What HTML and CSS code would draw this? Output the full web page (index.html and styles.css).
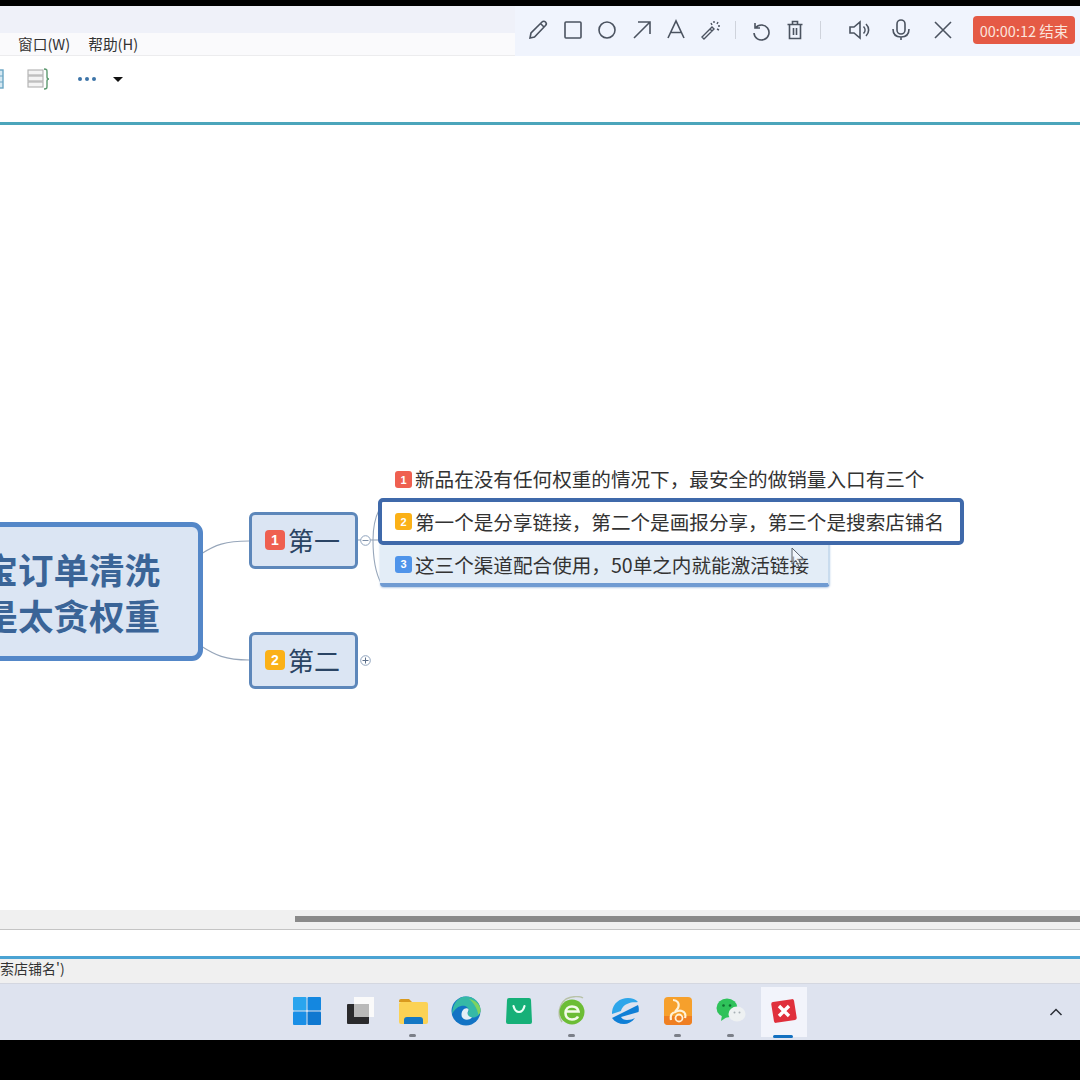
FILE: index.html
```html
<!DOCTYPE html>
<html lang="zh">
<head>
<meta charset="utf-8">
<title>思维导图</title>
<link rel="stylesheet" href="styles.css">
</head>
<body>
<div class="screen">
  <div class="black-top"></div>
  <div class="title-band"></div>
  <div class="menu-band">
    <span class="menu-item">窗口(W)</span>
    <span class="menu-item">帮助(H)</span>
  </div>
  <div class="tool-band">
    <svg class="tb-partial" width="5" height="20" viewBox="0 0 5 20"><rect x="-6" y="1" width="9" height="18" fill="#d5e8f2" stroke="#6aa5c4" stroke-width="1.4"/><path d="M-6 7H3M-6 13H3" stroke="#6aa5c4"/></svg>
    <svg class="tb-outline" width="24" height="22" viewBox="0 0 24 22"><g fill="#f4f4f4" stroke="#b0b0b0" stroke-width="1.1"><rect x="1" y="2" width="15" height="5"/><rect x="1" y="8" width="15" height="5"/><rect x="1" y="14" width="15" height="5"/></g><path d="M17 1c3 0 3 1 3 3v5c0 1 1 2 2 2-1 0-2 1-2 2v5c0 2 0 3-3 3" fill="none" stroke="#5d9a70" stroke-width="1.4"/></svg>
    <span class="tb-dots"><i></i><i></i><i></i></span>
    <span class="tb-caret"></span>
  </div>
  <div class="teal-line"></div>

  <main class="canvas">
    <svg class="links" width="1080" height="785" viewBox="0 0 1080 785">
      <g fill="none" stroke="#97a6ba" stroke-width="1.1">
        <path d="M201 429C215 420 225 416 249 416"/>
        <path d="M201 521C215 530 225 535 249 535"/>
        <path d="M358 415H361"/>
        <path d="M370 415H380"/>
        <path d="M379 385C374 395 373 405 373 415C373 425 374 445 381 458"/>
      </g>
      <circle cx="365.500" cy="415.500" r="4.800" fill="#fff" stroke="#8fa3bd"/>
      <path d="M362.500 415.500H368.500" stroke="#7d8fa8"/>
      <circle cx="365.500" cy="535.500" r="4.800" fill="#fff" stroke="#8fa3bd"/>
      <path d="M362.500 535.500H368.500M365.500 532.500V538.500" stroke="#5a6d88"/>
    </svg>

    <div class="central">
      <p>宝订单清洗</p>
      <p>是太贪权重</p>
    </div>

    <div class="branch branch-one"><span class="badge badge-lg red">1</span>第一</div>
    <div class="branch branch-two"><span class="badge badge-lg amber">2</span>第二</div>

    <div class="leaf leaf-one"><span class="badge red">1</span>新品在没有任何权重的情况下，最安全的做销量入口有三个</div>
    <div class="leaf leaf-three"><span class="badge blue">3</span>这三个渠道配合使用，50单之内就能激活链接</div>
    <div class="leaf leaf-two"><span class="badge amber">2</span>第一个是分享链接，第二个是画报分享，第三个是搜索店铺名</div>

    <svg class="cursor" width="16" height="22" viewBox="0 0 16 22"><path d="M1 1V17L5 13.500 8 20 10.500 19 7.800 12.800H13Z" fill="#fff" fill-opacity=".5" stroke="#59606b" stroke-width="1"/></svg>
  </main>

  <div class="scroll-band"><div class="scroll-thumb"></div></div>
  <div class="input-band"></div>
  <div class="status-band">索店铺名')</div>

  <footer class="taskbar">
    <div class="task-icon">
      <svg width="30" height="30" viewBox="0 0 30 30"><rect x="1" y="1" width="13.500" height="13.500" rx="1" fill="#2aa5ee"/><rect x="15.500" y="1" width="13.500" height="13.500" rx="1" fill="#1487e0"/><rect x="1" y="15.500" width="13.500" height="13.500" rx="1" fill="#1a8fe6"/><rect x="15.500" y="15.500" width="13.500" height="13.500" rx="1" fill="#0f78d0"/></svg>
    </div>
    <div class="task-icon">
      <svg width="30" height="30" viewBox="0 0 30 30"><rect x="9" y="1" width="20" height="20" fill="#fafafa"/><rect x="2" y="8" width="22" height="20" rx="1" fill="#2a2a2c"/><rect x="9" y="8" width="15" height="13" fill="#b9b9b9"/></svg>
    </div>
    <div class="task-icon open">
      <svg width="32" height="30" viewBox="0 0 32 30"><path d="M2 5a2 2 0 0 1 2-2h8l3 3h-13Z" fill="#d99a1f"/><rect x="2" y="6" width="29" height="22" rx="2" fill="#fbd255"/><path d="M7 28v-4a3 3 0 0 1 3-3h13a3 3 0 0 1 3 3v4Z" fill="#1478c4"/></svg>
    </div>
    <div class="task-icon">
      <svg width="30" height="30" viewBox="0 0 30 30"><circle cx="15" cy="15" r="14.500" fill="#1273c4"/><path d="M15 .5C23 .5 29.500 6.500 29.500 14c0 5-4 7.500-8 7.500-3 0-5-1.500-5-3.500 0-1.500 1-2 1-3.500C17.500 11 14 9 10 10 6 11 3 14 1 18 1.500 8 7 .5 15 .5Z" fill="#36b9a6"/><path d="M18 3c6 1 11.500 6 11.500 11 0 2-.5 3.500-2 5C26 12 23 7 18 3Z" fill="#7fd35f"/><path d="M10.500 19c0-4.500 3-7.500 6-6.500 1.500.5 1 2 .5 3-1 2-.5 5 4 6-4 4-10.500 2-10.500-2.500Z" fill="#e4eef5"/></svg>
    </div>
    <div class="task-icon">
      <svg width="26" height="28" viewBox="0 0 26 28"><path d="M1 3a2 2 0 0 1 2-2h20a2 2 0 0 1 2 2l1 22a2 2 0 0 1-2 2H2a2 2 0 0 1-2-2Z" fill="#16b078"/><path d="M7.500 9c1 4 3 6 5.500 6s4.500-2 5.500-6" fill="none" stroke="#eafff5" stroke-width="2.200" stroke-linecap="round"/></svg>
    </div>
    <div class="task-icon open">
      <svg width="28" height="30" viewBox="0 0 28 30"><path d="M4 26C-1 19 1 8 8 3 14 0 22 0 25 2" fill="none" stroke="#b8c2a8" stroke-width="1.500"/><circle cx="14" cy="16" r="12.500" fill="#6cbd35"/><path d="M7.500 15.500h13c-.5-3-3-5-6.500-5s-6.500 2.500-6.500 6.500 3 6.500 6.500 6.500c3 0 5-1 6-3" fill="none" stroke="#f3fbe9" stroke-width="2.600"/></svg>
    </div>
    <div class="task-icon">
      <svg width="28" height="28" viewBox="0 0 28 28"><path d="M1 15C2 6 9 1 17 1c4 0 8 1.500 10 4-2 .5-4.500 0-7 .5C14 7 11 10 10 14L1 17Z" fill="#2ea6ea"/><path d="M27 8c1 2 1 5 .5 7L10 20c1 2 3 3 6 3 3 0 6-1 8-2-3 4-7 6-11 6-5 0-9-2-12-6Z" fill="#0f7fd6"/></svg>
    </div>
    <div class="task-icon open">
      <svg width="28" height="30" viewBox="0 0 28 30"><rect x="0" y="1" width="28" height="28" rx="4" fill="#f6a02c"/><path d="M0 20h28v5a4 4 0 0 1-4 4H4a4 4 0 0 1-4-4Z" fill="#ef7f22"/><path d="M9 4c4 0 7 3 5 8l-3 4c2-1 5-2 7-1 3 1 4 4 3 7M7 24c-1-5 1-8 5-8" fill="none" stroke="#fff2d8" stroke-width="2.200"/><circle cx="15" cy="22" r="3.500" fill="none" stroke="#fff2d8" stroke-width="1.800"/></svg>
    </div>
    <div class="task-icon open">
      <svg width="30" height="28" viewBox="0 0 30 28"><ellipse cx="11" cy="11" rx="10.500" ry="9.500" fill="#2fc25a"/><path d="M6 18l-1 6 6-4Z" fill="#2fc25a"/><circle cx="7.500" cy="8.500" r="1.300" fill="#0f6f30"/><circle cx="14" cy="8.500" r="1.300" fill="#0f6f30"/><ellipse cx="21" cy="17" rx="8.500" ry="7.500" fill="#eef1f2"/><circle cx="18.500" cy="15.500" r="1" fill="#a8b0b6"/><circle cx="23.500" cy="15.500" r="1" fill="#a8b0b6"/></svg>
    </div>
    <div class="task-icon active">
      <svg width="26" height="26" viewBox="0 0 26 26"><rect x="1.500" y="2.500" width="23" height="21" rx="2" transform="rotate(-9 13 13)" fill="#e0303c"/><path d="M8 8l10 10M18 8L8 18" stroke="#fff" stroke-width="3.400"/></svg>
    </div>
    <svg class="tray-chevron" width="14" height="10" viewBox="0 0 14 10"><path d="M1.500 8L7 2.500 12.500 8" fill="none" stroke="#2b2f36" stroke-width="1.500"/></svg>
  </footer>
  <div class="black-bottom"></div>

  <aside class="recorder">
    <svg class="rec-icon" width="24" height="24" viewBox="0 0 24 24"><path d="M4 20l1-5L16 4c1-1 2.500-1 3.500 0s1 2.500 0 3.500L8.500 19Z M14.500 5.500l4 4"/></svg>
    <svg class="rec-icon" width="24" height="24" viewBox="0 0 24 24"><rect x="4" y="4" width="16" height="16" rx="1"/></svg>
    <svg class="rec-icon" width="24" height="24" viewBox="0 0 24 24"><circle cx="12" cy="12" r="8"/></svg>
    <svg class="rec-icon" width="24" height="24" viewBox="0 0 24 24"><path d="M4 20L20 4M8 4h12v12"/></svg>
    <svg class="rec-icon" width="24" height="24" viewBox="0 0 24 24"><path d="M4 20L12 3l8 17M6.500 14.500h11"/></svg>
    <svg class="rec-icon" width="24" height="24" viewBox="0 0 24 24"><path d="M4 20l-1-1L13 9l2 2L5 21ZM11 11l2 2M15 3v2M19 4l-1 2M21 8h-2M20 12l-2-1M12 5l1 2" stroke-width="1.400"/></svg>
    <span class="rec-sep"></span>
    <svg class="rec-icon" width="24" height="24" viewBox="0 0 24 24"><path d="M6 5v5h5M6.500 10A7.500 7.500 0 1 1 5 15"/></svg>
    <svg class="rec-icon" width="24" height="24" viewBox="0 0 24 24"><path d="M4.500 6.500h15M9.500 6V3.500h5V6M6.500 6.500V20.500h11V6.500M10.500 10v7M13.500 10v7"/></svg>
    <span class="rec-sep rec-sep-wide"></span>
    <svg class="rec-icon rec-wide" width="24" height="24" viewBox="0 0 24 24"><path d="M3 9v6h4l6 5V4L7 9ZM16.500 8.500c2 2 2 5 0 7M19 6c3.500 3.500 3.500 8.500 0 12"/></svg>
    <svg class="rec-icon rec-wide" width="24" height="24" viewBox="0 0 24 24"><rect x="8" y="2" width="8" height="14" rx="4"/><path d="M4 11c0 6 4 8 8 8s8-2 8-8M12 19v3"/></svg>
    <svg class="rec-icon rec-wide" width="24" height="24" viewBox="0 0 24 24"><path d="M4 4l16 16M20 4L4 20"/></svg>
    <button class="rec-stop">00:00:12 结束</button>
  </aside>
</div>
</body>
</html>
```
FILE: styles.css
```css
* { box-sizing: border-box; }
html, body { margin: 0; padding: 0; background: #000; }
body { font-family: "Noto Sans CJK SC", "Noto Sans", sans-serif; }

.screen {
  position: relative;
  width: 1080px;
  height: 1080px;
  display: flex;
  flex-direction: column;
  overflow: hidden;
  background: #fff;
}

.black-top { height: 6px; background: #000; }
.title-band { height: 27px; background: #eff1f9; }

.menu-band {
  height: 23px;
  background: #fafafc;
  border-bottom: 1px solid #ececee;
  display: flex;
  align-items: center;
  gap: 18px;
  padding-left: 18px;
  padding-bottom: 1px;
  font-size: 14.700px;
  color: #333;
}

.tool-band {
  height: 66px;
  background: #fff;
  display: flex;
  align-items: flex-start;
  padding-top: 12px;
}
.tb-partial { margin-top: 1px; }
.tb-outline { margin-left: 22px; }
.tb-dots { display: flex; gap: 3px; margin: 9px 0 0 27px; }
.tb-dots i { width: 4px; height: 4px; border-radius: 50%; background: #3d74a8; }
.tb-caret {
  margin: 9px 0 0 17px;
  width: 0;
  height: 0;
  border-left: 5px solid transparent;
  border-right: 5px solid transparent;
  border-top: 5px solid #111;
}

.teal-line { height: 3px; background: #4ba5bb; }

.canvas { position: relative; height: 785px; background: #fff; overflow: hidden; }
.links { position: absolute; left: 0; top: 0; }

.central {
  position: absolute;
  left: -60px;
  top: 397px;
  width: 263px;
  height: 139px;
  border: 5px solid #5487c8;
  border-radius: 11px;
  background: #dbe5f3;
  padding: 19px 38px 0 0;
  color: #3a6497;
  font-size: 35.500px;
  font-weight: 700;
  line-height: 46px;
  text-align: right;
  white-space: nowrap;
}
.central p { margin: 0; }

.branch {
  position: absolute;
  left: 249px;
  width: 109px;
  height: 57px;
  border: 3px solid #5d87ba;
  border-radius: 6px;
  background: #dbe5f3;
  display: flex;
  align-items: center;
  padding: 0 0 2px 13px;
  gap: 3px;
  color: #2a4464;
  font-size: 26px;
  white-space: nowrap;
}
.branch-one { top: 387px; }
.branch-two { top: 507px; }
.branch .badge { margin-top: 1px; }

.badge {
  flex: none;
  width: 17px;
  height: 17px;
  border-radius: 3px;
  display: flex;
  align-items: center;
  justify-content: center;
  color: #fff;
  font: 700 11px "Liberation Sans", sans-serif;
}
.badge-lg { width: 20px; height: 20px; border-radius: 4px; font-size: 14px; }
.red { background: #ef6050; }
.amber { background: #fbb117; }
.blue { background: #4f94ea; }

.leaf {
  position: absolute;
  display: flex;
  align-items: center;
  gap: 3px;
  font-size: 19.600px;
  color: #333;
  white-space: nowrap;
}
.leaf-one { left: 395px; top: 338px; height: 30px; }
.leaf-one .badge { margin-top: 3px; }
.leaf-two {
  left: 378px;
  top: 373px;
  width: 586px;
  height: 47px;
  padding-left: 17px;
  border: 4px solid #3f69aa;
  border-radius: 5px;
  background: #fff;
}
.leaf-two .badge { margin-left: -4px; }
.leaf-three {
  left: 380px;
  top: 418px;
  width: 450px;
  height: 44px;
  padding: 2px 0 0 15px;
  border-right: 2px solid #c9dcee;
  border-bottom: 4px solid #6f9bd2;
  border-radius: 0 0 4px 4px;
  background: #e3edf7;
  box-shadow: 0 1px 2px #b6cce6;
}

.cursor { position: absolute; left: 791px; top: 422px; }

.scroll-band {
  height: 20px;
  background: #f0f0f0;
  border-bottom: 1px solid #c4c4c4;
  padding: 6px 0 0 295px;
}
.scroll-thumb { height: 6px; background: #8a8a8a; }
.input-band { height: 26px; background: #fff; }

.status-band {
  height: 28px;
  border-top: 3px solid #4ba3d3;
  border-bottom: 1px solid #d4d7e0;
  background: #f0f0f0;
  display: flex;
  align-items: center;
  padding-bottom: 6px;
  font-size: 14px;
  color: #333;
  white-space: nowrap;
}

.taskbar {
  position: relative;
  height: 56px;
  background: #dee3ef;
  display: flex;
  padding-left: 280px;
}
.task-icon {
  position: relative;
  width: 53px;
  height: 56px;
  display: flex;
  align-items: center;
  justify-content: center;
  padding-bottom: 2px;
}
.task-icon.open::after {
  content: "";
  position: absolute;
  left: 23px;
  bottom: 3px;
  width: 7px;
  height: 3px;
  border-radius: 2px;
  background: #7b7f88;
}
.task-icon.active { background: linear-gradient(#f2f4fb, #f2f4fb) center / 46px 50px no-repeat; }
.task-icon.active::after {
  content: "";
  position: absolute;
  left: 16px;
  bottom: 2px;
  width: 20px;
  height: 3px;
  border-radius: 2px;
  background: #1270c0;
}
.tray-chevron { position: absolute; left: 1049px; top: 23px; }

.black-bottom { height: 40px; background: #000; }

.recorder {
  position: absolute;
  left: 515px;
  top: 6px;
  width: 565px;
  height: 50px;
  background: #f0f4fd;
  display: flex;
  align-items: center;
  padding: 0 0 2px 11px;
  gap: 10.500px;
}
.rec-icon { flex: none; fill: none; stroke: #4b5360; stroke-width: 1.600; }
.rec-sep { flex: none; width: 1px; height: 18px; background: #cfd3dc; margin: 0 2px 0 2px; }
.rec-sep-wide { margin: 0 8px 0 2px; }
.rec-wide { margin-left: 7.500px; }
.rec-stop {
  flex: none;
  margin-left: 8px;
  width: 102px;
  height: 28px;
  border: 0;
  border-radius: 4px;
  background: #e55a45;
  color: #fbe4dc;
  font: 14.500px "Noto Sans CJK SC", sans-serif;
  padding: 0;
  white-space: nowrap;
}
```
